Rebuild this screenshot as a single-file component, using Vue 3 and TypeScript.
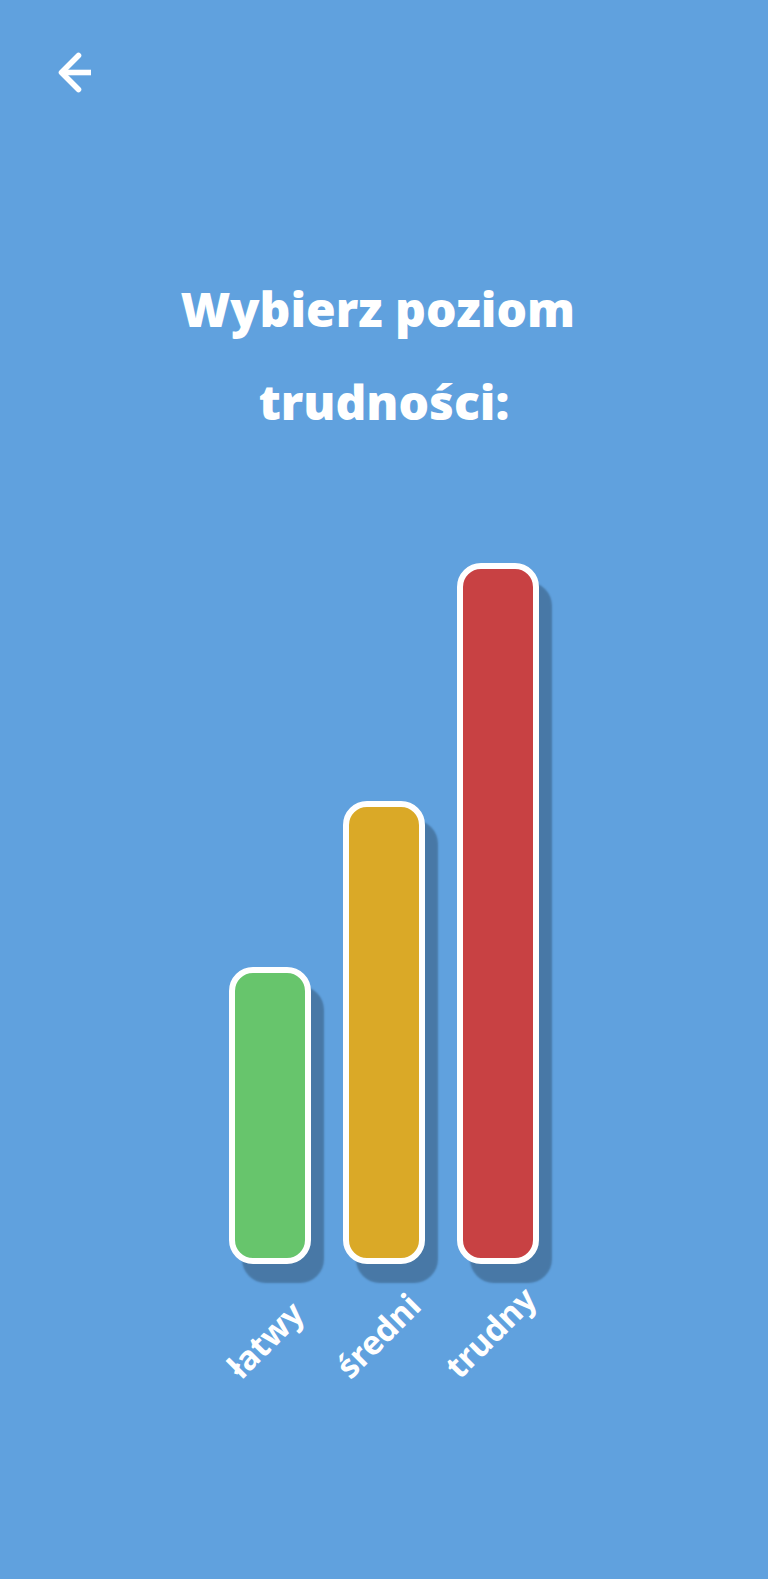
<script setup lang="ts">
interface Level {
  id: string
  label: string
  color: string
  height: number
}

const levels: Level[] = [
  { id: 'easy', label: 'łatwy', color: '#67c56c', height: 297 },
  { id: 'medium', label: 'średni', color: '#daa927', height: 463 },
  { id: 'hard', label: 'trudny', color: '#c84143', height: 701 },
]
</script>

<template>
  <main class="screen">
    <header class="top">
      <button class="back" type="button" aria-label="Wstecz">
        <svg width="40" height="44" viewBox="0 0 40 44" fill="none" stroke="#fff" stroke-width="5.6" stroke-linejoin="round">
          <path d="M22.5 5.5 5.5 22.5l17 17" stroke-linecap="round" />
          <path d="M5.5 22.5h29.5" />
        </svg>
      </button>
    </header>
    <h1 class="title">Wybierz poziom&nbsp;<br />trudności:</h1>
    <section class="levels">
      <button v-for="level in levels" :key="level.id" class="level" type="button">
        <span class="bar" :style="{ height: level.height + 'px', background: level.color }"></span>
        <span class="label">{{ level.label }}</span>
      </button>
    </section>
  </main>
</template>

<style>
body {
  background: #60a1de;
}
</style>

<style scoped>
.screen {
  display: flex;
  flex-direction: column;
  min-height: 100vh;
  box-sizing: border-box;
  background: #60a1de;
  color: #fff;
}

.top {
  padding: 50px 56px 0;
}

.back {
  display: block;
  padding: 0;
  border: 0;
  background: none;
  cursor: pointer;
}

.back svg {
  display: block;
}

.title {
  margin: 168px 0 0;
  font: 800 48px/93px "Open Sans", sans-serif;
  text-align: center;
}

.levels {
  display: flex;
  justify-content: center;
  align-items: flex-end;
  gap: 32px;
  margin-top: 115px;
}

.level {
  display: flex;
  flex-direction: column;
  align-items: center;
  width: 82px;
  padding: 0;
  border: 0;
  background: none;
  color: inherit;
  cursor: pointer;
}

.bar {
  width: 100%;
  box-sizing: border-box;
  border: 6px solid #fff;
  border-radius: 24px;
  box-shadow: 13px 19px 2px rgba(0, 0, 0, 0.25);
}

.label {
  margin: 84px 0 0 18px;
  font: 700 33px/48px "Noto Sans", "Open Sans", sans-serif;
  transform: rotate(-45deg);
  transform-origin: left center;
}
</style>
